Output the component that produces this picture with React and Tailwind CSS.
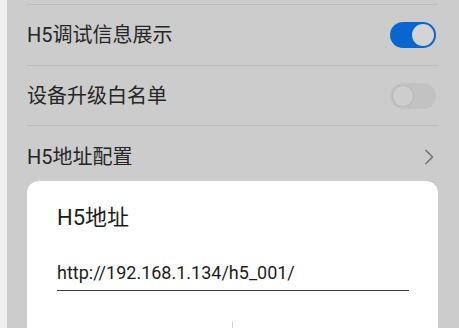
export default function App() {
  const font = { fontFamily: "Roboto, 'Noto Sans CJK SC', sans-serif" };
  return (
    <div className="w-[459px] h-[328px] overflow-hidden bg-[#efefef] flex" style={font}>
      <div className="w-[7px] shrink-0" />
      <div className="flex-1 bg-[#cccccc] pl-[20px] pr-[21px] flex flex-col">
        <div className="h-[4px] shrink-0" />
        <div className="h-px bg-[#bdbdbd] shrink-0" />
        <div className="h-[60px] shrink-0 flex items-center justify-between">
          <span className="text-[20px] text-[#262626] leading-[28px]">H5调试信息展示</span>
          <div className="w-[46px] h-[26px] rounded-full bg-[#0a66cf] flex items-center justify-end pr-[2px] mr-[2px]">
            <div className="w-[22px] h-[22px] rounded-full bg-[#d4d4d4]" />
          </div>
        </div>
        <div className="h-px bg-[#bdbdbd] shrink-0" />
        <div className="h-[59px] shrink-0 flex items-center justify-between">
          <span className="text-[20px] text-[#262626] leading-[28px]">设备升级白名单</span>
          <div className="w-[46px] h-[26px] rounded-full bg-[#c2c2c2] flex items-center pl-[2px] mr-[2px]">
            <div className="w-[22px] h-[22px] rounded-full bg-[#cdcdcd] border border-[#b8b8b8]" />
          </div>
        </div>
        <div className="h-px bg-[#bdbdbd] shrink-0" />
        <div className="h-[55px] shrink-0 pt-[6px] flex items-center justify-between">
          <span className="text-[20px] text-[#262626] leading-[28px]">H5地址配置</span>
          <svg width="10" height="16" viewBox="0 0 10 16" className="mr-[4px]">
            <polyline points="1.5,1 8.5,8 1.5,15" fill="none" stroke="#6b6b6b" strokeWidth="1.4" />
          </svg>
        </div>
        <div className="flex-1 bg-white rounded-t-[12px] flex flex-col pt-[22px]">
          <div className="pl-[30px] text-[22px] leading-[30px] text-[#1c1c1c]">H5地址</div>
          <div className="mt-[28px] ml-[30px] mr-[29px] border-b border-[#3a3a3a] pb-[5px] text-[18px] leading-[24px] text-[#1c1c1c]">
            http://192.168.1.134/h5_001/
          </div>
          <div className="mt-[31px] flex-1 flex">
            <div className="flex-1" />
            <div className="w-px bg-[#cfcfcf]" />
            <div className="flex-1" />
          </div>
        </div>
      </div>
    </div>
  );
}
